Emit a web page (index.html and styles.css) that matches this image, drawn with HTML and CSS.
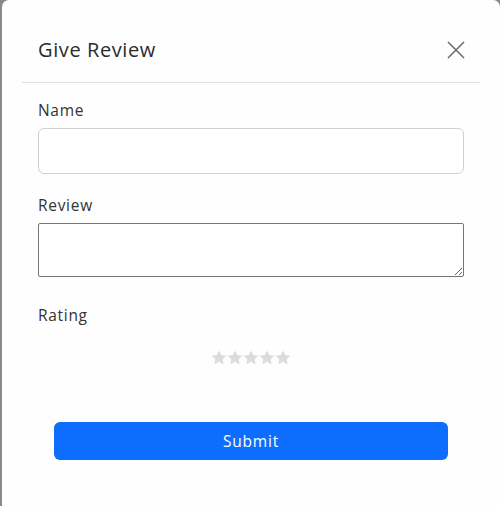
FILE: index.html
```html
<!DOCTYPE html>
<html>
<head>
<meta charset="utf-8">
<link rel="stylesheet" href="styles.css">
</head>
<body>
<div class="modal">
  <div class="modal-header">
    <h2 class="title">Give Review</h2>
    <button class="close" aria-label="Close">
      <svg width="18" height="18" viewBox="0 0 18 18"><path d="M1 1L17 17M17 1L1 17" stroke="#6b6b6b" stroke-width="1.6" fill="none"/></svg>
    </button>
  </div>
  <div class="modal-body">
    <label class="label">Name</label>
    <input class="input" type="text">
    <label class="label label-gap">Review</label>
    <textarea class="textarea"></textarea>
    <label class="label label-gap2">Rating</label>
    <div class="stars">
      <svg class="star" viewBox="0 0 24 24"><path d="M12 0.6l3.4 7 7.8 1-5.7 5.3 1.5 7.7L12 17.8l-7 3.8 1.5-7.7L0.8 8.6l7.8-1z"/></svg>
      <svg class="star" viewBox="0 0 24 24"><path d="M12 0.6l3.4 7 7.8 1-5.7 5.3 1.5 7.7L12 17.8l-7 3.8 1.5-7.7L0.8 8.6l7.8-1z"/></svg>
      <svg class="star" viewBox="0 0 24 24"><path d="M12 0.6l3.4 7 7.8 1-5.7 5.3 1.5 7.7L12 17.8l-7 3.8 1.5-7.7L0.8 8.6l7.8-1z"/></svg>
      <svg class="star" viewBox="0 0 24 24"><path d="M12 0.6l3.4 7 7.8 1-5.7 5.3 1.5 7.7L12 17.8l-7 3.8 1.5-7.7L0.8 8.6l7.8-1z"/></svg>
      <svg class="star" viewBox="0 0 24 24"><path d="M12 0.6l3.4 7 7.8 1-5.7 5.3 1.5 7.7L12 17.8l-7 3.8 1.5-7.7L0.8 8.6l7.8-1z"/></svg>
    </div>
    <div class="actions">
      <button class="submit">Submit</button>
    </div>
  </div>
</div>
</body>
</html>
```
FILE: styles.css
```css
html, body {
  margin: 0;
  padding: 0;
  height: 100%;
}
body {
  background: #8a8a8a;
  font-family: "Open Sans", "Noto Sans", sans-serif;
  color: #2b2b2b;
  overflow: hidden;
}
.modal {
  margin-left: 2px;
  width: 498px;
  height: 520px;
  background: #fefefe;
  border-radius: 7px 7px 0 0;
  padding: 0 20px;
  box-sizing: border-box;
}
.modal-header {
  height: 83px;
  box-sizing: border-box;
  border-bottom: 1px solid #dedede;
  display: flex;
  align-items: center;
  justify-content: space-between;
  padding: 17px 15px 0 16px;
}
.title {
  margin: 0;
  font-size: 20px;
  font-weight: 500;
  letter-spacing: 0.6px;
  color: #2b2b2b;
}
.close {
  background: none;
  border: 0;
  padding: 0;
  width: 18px;
  height: 18px;
  display: block;
}
.close svg { display: block; }
.modal-body {
  padding: 15px 16px 0 16px;
  display: flex;
  flex-direction: column;
}
.label {
  font-size: 15.5px;
  line-height: 24px;
  letter-spacing: 0.7px;
  color: #333;
}
.label-gap { margin-top: 19px; }
.label-gap2 { margin-top: 26px; }
.input {
  margin-top: 6px;
  height: 46px;
  box-sizing: border-box;
  border: 1px solid #d0d0d0;
  border-radius: 6px;
  background: #fff;
}
.textarea {
  margin-top: 6px;
  height: 54px;
  box-sizing: border-box;
  border: 1px solid #767676;
  border-radius: 2px;
  background: #fff;
  resize: vertical;
}
.stars {
  display: flex;
  justify-content: center;
  margin-top: 23px;
  height: 16px;
}
.star {
  width: 16px;
  height: 16px;
  fill: #dcdcdc;
  display: block;
}
.actions {
  margin-top: 56px;
  padding: 0 16px;
  display: flex;
}
.submit {
  flex: 1;
  height: 38px;
  border: 0;
  border-radius: 6px;
  background: #0d6efd;
  color: #fff;
  font-family: "Open Sans", "Noto Sans", sans-serif;
  font-size: 15.5px;
  letter-spacing: 0.8px;
}
```
